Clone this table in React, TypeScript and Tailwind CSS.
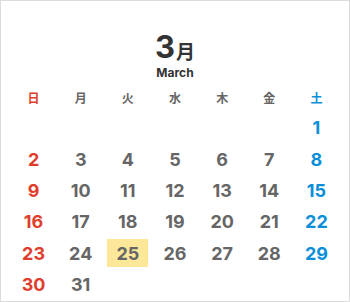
import React from 'react';

const WEEKDAYS = ['日', '月', '火', '水', '木', '金', '土'];

// March starts on Saturday
const CELLS: (number | null)[] = [
  null, null, null, null, null, null, 1,
  ...Array.from({ length: 31 - 1 }, (_, i) => i + 2),
];

const TODAY = 25;

function colorFor(col: number) {
  if (col === 0) return 'text-[#e03e2d]';
  if (col === 6) return 'text-[#0b8fd8]';
  return 'text-[#666666]';
}

export default function App() {
  return (
    <div
      className="w-[350px] h-[302px] bg-white border border-[#dcdcdc] px-[9px] pt-[31px] overflow-hidden"
      style={{ fontFamily: 'Inter, "Noto Sans CJK JP", sans-serif' }}
    >
      {/* Month heading */}
      <div className="h-[30px] flex items-end justify-center text-[#333333] font-bold leading-none">
        <span className="text-[31px] leading-[30px]">3</span>
        <span className="text-[19px] leading-[22px] ml-[1px]" style={{ fontFamily: '"Noto Sans CJK JP", sans-serif' }}>
          月
        </span>
      </div>
      <div className="h-[14px] mt-[4px] text-center text-[12px] leading-[14px] font-bold text-[#333333]">March</div>

      {/* Weekday labels */}
      <div className="grid grid-cols-7 mt-[8px] h-[20px]">
        {WEEKDAYS.map((d, i) => (
          <div
            key={d}
            className={`flex items-center justify-center text-[12px] font-bold ${colorFor(i)}`}
            style={{ fontFamily: '"Noto Sans CJK JP", sans-serif' }}
          >
            {d}
          </div>
        ))}
      </div>

      {/* Days */}
      <div className="grid grid-cols-7 mt-[4px]">
        {CELLS.map((day, i) => (
          <div key={i} className="h-[31.4px] flex items-center justify-center">
            {day !== null && (
              <span
                className={`flex items-center justify-center w-[41px] h-[28px] text-[18px] font-bold ${colorFor(i % 7)} ${
                  day === TODAY ? 'bg-[#fde89a]' : ''
                }`}
              >
                {day}
              </span>
            )}
          </div>
        ))}
      </div>
    </div>
  );
}
